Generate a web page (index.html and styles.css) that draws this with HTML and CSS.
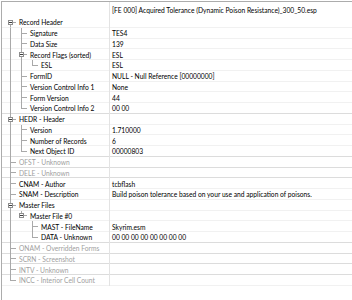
FILE: index.html
```html
<!DOCTYPE html>
<html lang="en">
<head>
    <meta charset="UTF-8">
    <title>Record View</title>
    <link rel="stylesheet" href="styles.css">
</head>
<body>
    <div class="view">
        <div class="head">
            <div class="name"></div>
            <div class="value">[FE 000] Acquired Tolerance (Dynamic Poison Resistance)_300_50.esp</div>
        </div>

        <!-- Record Header -->
        <div class="row">
            <div class="name"><span class="g first"><i class="box"></i></span><span class="label">Record Header</span></div>
            <div class="value"></div>
        </div>
        <div class="row">
            <div class="name"><span class="g pipe"></span><span class="g tee"></span><span class="label">Signature</span></div>
            <div class="value">TES4</div>
        </div>
        <div class="row">
            <div class="name"><span class="g pipe"></span><span class="g tee"></span><span class="label">Data Size</span></div>
            <div class="value">139</div>
        </div>
        <div class="row">
            <div class="name"><span class="g pipe"></span><span class="g mid"><i class="box"></i></span><span class="label">Record Flags (sorted)</span></div>
            <div class="value">ESL</div>
        </div>
        <div class="row">
            <div class="name"><span class="g pipe"></span><span class="g pipe"></span><span class="g end"></span><span class="label">ESL</span></div>
            <div class="value">ESL</div>
        </div>
        <div class="row">
            <div class="name"><span class="g pipe"></span><span class="g tee"></span><span class="label">FormID</span></div>
            <div class="value">NULL - Null Reference [00000000]</div>
        </div>
        <div class="row">
            <div class="name"><span class="g pipe"></span><span class="g tee"></span><span class="label">Version Control Info 1</span></div>
            <div class="value">None</div>
        </div>
        <div class="row">
            <div class="name"><span class="g pipe"></span><span class="g tee"></span><span class="label">Form Version</span></div>
            <div class="value">44</div>
        </div>
        <div class="row dk">
            <div class="name"><span class="g pipe"></span><span class="g end"></span><span class="label">Version Control Info 2</span></div>
            <div class="value">00 00</div>
        </div>

        <!-- HEDR -->
        <div class="row">
            <div class="name"><span class="g mid"><i class="box"></i></span><span class="label">HEDR - Header</span></div>
            <div class="value"></div>
        </div>
        <div class="row">
            <div class="name"><span class="g pipe"></span><span class="g tee"></span><span class="label">Version</span></div>
            <div class="value">1.710000</div>
        </div>
        <div class="row">
            <div class="name"><span class="g pipe"></span><span class="g tee"></span><span class="label">Number of Records</span></div>
            <div class="value">6</div>
        </div>
        <div class="row dk">
            <div class="name"><span class="g pipe"></span><span class="g end"></span><span class="label">Next Object ID</span></div>
            <div class="value">00000803</div>
        </div>

        <div class="row dk dim">
            <div class="name"><span class="g tee"></span><span class="label">OFST - Unknown</span></div>
            <div class="value"></div>
        </div>
        <div class="row dk dim">
            <div class="name"><span class="g tee"></span><span class="label">DELE - Unknown</span></div>
            <div class="value"></div>
        </div>
        <div class="row">
            <div class="name"><span class="g tee"></span><span class="label">CNAM - Author</span></div>
            <div class="value">tcbflash</div>
        </div>
        <div class="row">
            <div class="name"><span class="g tee"></span><span class="label">SNAM - Description</span></div>
            <div class="value">Build poison tolerance based on your use and application of poisons.</div>
        </div>

        <!-- Master Files -->
        <div class="row">
            <div class="name"><span class="g mid"><i class="box"></i></span><span class="label">Master Files</span></div>
            <div class="value"></div>
        </div>
        <div class="row">
            <div class="name"><span class="g pipe"></span><span class="g last"><i class="box"></i></span><span class="label">Master File #0</span></div>
            <div class="value"></div>
        </div>
        <div class="row">
            <div class="name"><span class="g pipe"></span><span class="g"></span><span class="g tee"></span><span class="label">MAST - FileName</span></div>
            <div class="value">Skyrim.esm</div>
        </div>
        <div class="row dk">
            <div class="name"><span class="g pipe"></span><span class="g"></span><span class="g end"></span><span class="label">DATA - Unknown</span></div>
            <div class="value">00 00 00 00 00 00 00 00</div>
        </div>

        <div class="row dk dim">
            <div class="name"><span class="g tee"></span><span class="label">ONAM - Overridden Forms</span></div>
            <div class="value"></div>
        </div>
        <div class="row dk dim">
            <div class="name"><span class="g tee"></span><span class="label">SCRN - Screenshot</span></div>
            <div class="value"></div>
        </div>
        <div class="row dk dim">
            <div class="name"><span class="g tee"></span><span class="label">INTV - Unknown</span></div>
            <div class="value"></div>
        </div>
        <div class="row dim">
            <div class="name"><span class="g end"></span><span class="label">INCC - Interior Cell Count</span></div>
            <div class="value"></div>
        </div>
    </div>
</body>
</html>
```

FILE: styles.css
```css
body {
    margin: 0;
    font-family: "Lato", "Noto Sans", sans-serif;
    font-size: 6.7px;
    color: #000000;
    background: #ffffff;
}

.view {
    margin: 1px 0 0 1px;
    height: 298px;
    border-top: 1px solid #acacac;
    border-left: 1px solid #acacac;
}

.head,
.row {
    display: grid;
    grid-template-columns: 108px 1fr;
}

.head {
    height: 15px;
}

.row {
    height: 10.75px;
    box-shadow: inset 0 -1px #f1f1f1;
}

.row.dk {
    box-shadow: inset 0 -1px #dcdcdc;
}

.row.dim {
    color: #a0a0a0;
}

.name {
    display: flex;
    padding-left: 3px;
    border-right: 1px solid #e3e3e3;
    white-space: nowrap;
    overflow: hidden;
}

.value {
    display: flex;
    align-items: center;
    padding-left: 2px;
    white-space: nowrap;
    overflow: hidden;
}

.label {
    display: flex;
    align-items: center;
    padding-left: 3px;
}

/* tree guides, one 11px column per level */
.g {
    flex: 0 0 11px;
    display: flex;
    align-items: center;
    justify-content: center;
    background-repeat: no-repeat;
}

.g.pipe {
    background-image: linear-gradient(#a9a9a9, #a9a9a9);
    background-position: 5px 0;
    background-size: 1px 100%;
}

.g.tee,
.g.mid {
    background-image: linear-gradient(#a9a9a9, #a9a9a9), linear-gradient(#a9a9a9, #a9a9a9);
    background-position: 5px 0, 5px 50%;
    background-size: 1px 100%, 6px 1px;
}

.g.end,
.g.last {
    background-image: linear-gradient(#a9a9a9, #a9a9a9), linear-gradient(#a9a9a9, #a9a9a9);
    background-position: 5px 0, 5px 50%;
    background-size: 1px 50%, 6px 1px;
}

.g.first {
    background-image: linear-gradient(#a9a9a9, #a9a9a9), linear-gradient(#a9a9a9, #a9a9a9);
    background-position: 5px 100%, 5px 50%;
    background-size: 1px 50%, 6px 1px;
}

.box {
    width: 3px;
    height: 3px;
    border: 1px solid #8e8e8e;
    background: #ffffff linear-gradient(#3c3c3c, #3c3c3c) center / 3px 1px no-repeat;
}
```
